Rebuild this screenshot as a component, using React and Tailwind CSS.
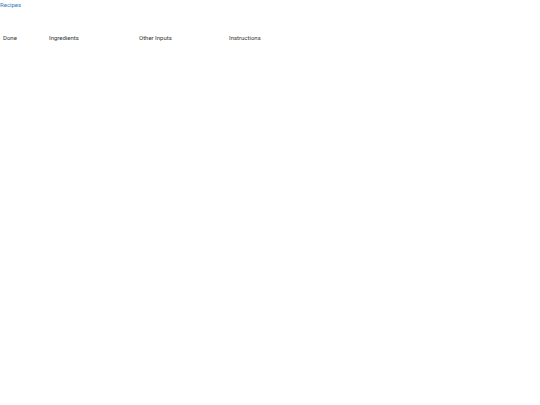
export default function App() {
  return (
    <div className="w-[540px] h-[405px] bg-white text-[6px] leading-[9px]" style={{ fontFamily: 'Roboto, "Liberation Sans", Arial, sans-serif' }}>
      <a className="block text-[#337ab7]">Recipes</a>
      <div className="mt-[22px] flex text-[#333]">
        <div className="w-[46px] px-[3px] py-[2px]">Done</div>
        <div className="w-[90px] px-[3px] py-[2px]">Ingredients</div>
        <div className="w-[90px] px-[3px] py-[2px]">Other Inputs</div>
        <div className="w-[90px] px-[3px] py-[2px]">Instructions</div>
      </div>
    </div>
  );
}
